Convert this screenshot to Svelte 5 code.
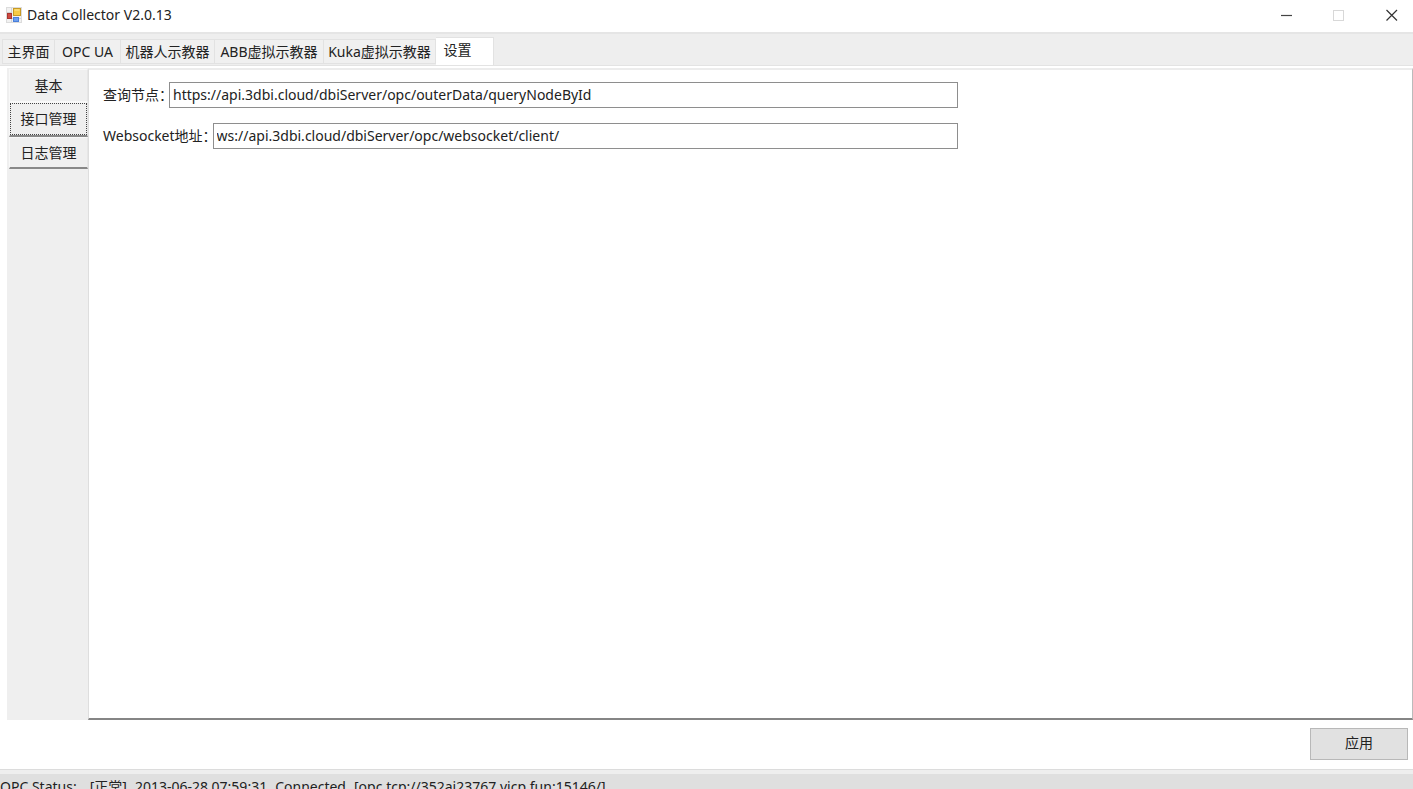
<script>
  const tabs = [
    { label: '主界面', basis: 53 },
    { label: 'OPC UA', basis: 66 },
    { label: '机器人示教器', basis: 94 },
    { label: 'ABB虚拟示教器', basis: 109 },
    { label: 'Kuka虚拟示教器', basis: 112 },
    { label: '设置', basis: 58 }
  ];
  const sections = ['基本', '接口管理', '日志管理'];
  let activeTab = $state(5);
  let activeSection = $state(1);
  let nodeUrl = $state('https://api.3dbi.cloud/dbiServer/opc/outerData/queryNodeById');
  let socketUrl = $state('ws://api.3dbi.cloud/dbiServer/opc/websocket/client/');
</script>

<div class="window">
  <header class="titlebar">
    <svg class="logo" width="17" height="17" viewBox="0 0 17 17" aria-hidden="true">
      <rect x="0.5" y="0.5" width="15" height="15" fill="#f1f1f1" stroke="#dcdcdc" />
      <path d="M1 5.5H6M1 11.5H15M5.5 1V15M10.5 11V15" stroke="#d4d4d4" />
      <rect x="1.5" y="6.5" width="4" height="5" fill="#cf4a42" stroke="#a93630" />
      <rect x="7.5" y="1.5" width="7" height="7" fill="#f7cb45" stroke="#c79a25" />
      <path d="M8.5 3H13.5" stroke="#ffe79a" />
      <rect x="7.5" y="10.5" width="5" height="4" fill="#6c9ff0" stroke="#4a7fda" />
    </svg>
    <h1>Data Collector V2.0.13</h1>
    <div class="controls">
      <button aria-label="最小化"><svg width="12" height="12" viewBox="0 0 12 12"><path d="M1 6.5H12" stroke="#444" stroke-width="1.2" /></svg></button>
      <button aria-label="最大化" disabled><svg width="12" height="12" viewBox="0 0 12 12"><rect x="0.5" y="1.5" width="10" height="10" fill="none" stroke="#d8d8d8" /></svg></button>
      <button aria-label="关闭"><svg width="12" height="12" viewBox="0 0 12 12"><path d="M0.5 1L11 11.5M11 1L0.5 11.5" stroke="#333" stroke-width="1.2" /></svg></button>
    </div>
  </header>

  <div class="tabs" role="tablist">
    {#each tabs as tab, i}
      <button
        role="tab"
        class:active={activeTab === i}
        aria-selected={activeTab === i}
        style="flex-basis: {tab.basis}px"
        onclick={() => (activeTab = i)}>{tab.label}</button>
    {/each}
  </div>

  <main>
    <nav>
      {#each sections as section, i}
        <button class:selected={activeSection === i} onclick={() => (activeSection = i)}><span>{section}</span></button>
      {/each}
    </nav>
    <section class="panel">
      <div class="field">
        <label for="node-url">查询节点：</label>
        <input id="node-url" type="text" spellcheck="false" bind:value={nodeUrl} />
      </div>
      <div class="field">
        <label for="socket-url">Websocket地址：</label>
        <input id="socket-url" type="text" spellcheck="false" bind:value={socketUrl} />
      </div>
    </section>
  </main>

  <div class="actions"><button>应用</button></div>

  <footer>
    <span class="caption">OPC Status:</span>
    <span>[正常]</span>
    <span>2013-06-28 07:59:31</span>
    <span>Connected</span>
    <span>[opc.tcp://352ai23767.vicp.fun:15146/]</span>
  </footer>
</div>

<style>
  .window {
    display: flex;
    flex-direction: column;
    height: 100vh;
    overflow: hidden;
    background: #fff;
    color: #222;
    font: 14px/20px "Noto Sans", "Noto Sans CJK SC", sans-serif;
  }
  .window * { box-sizing: border-box; }
  button, input {
    margin: 0;
    padding: 0;
    border: 0;
    border-radius: 0;
    background: none;
    color: inherit;
    font: inherit;
  }
  .titlebar {
    display: flex;
    flex: none;
    align-items: center;
    height: 32px;
    padding: 0 0 2px 6px;
  }
  h1 {
    margin: 0 auto 0 4px;
    font-size: 14px;
    font-weight: 400;
  }
  .controls {
    display: flex;
    margin-right: -5px;
  }
  .controls button {
    display: grid;
    place-items: center;
    width: 53px;
    height: 30px;
  }
  .tabs {
    display: flex;
    flex: none;
    align-items: flex-end;
    height: 34px;
    padding: 0 0 1px 2px;
    border-top: 2px solid #e5e5e5;
    border-bottom: 1px solid #e3e3e3;
    background: #eee;
  }
  .tabs button {
    flex: 0 0 auto;
    height: 25px;
    border: 1px solid #e2e2e2;
    border-left-width: 0;
    background: #f0f0f0;
    white-space: nowrap;
  }
  .tabs button:first-child { border-left-width: 1px; }
  .tabs button.active {
    height: 28px;
    margin-bottom: -1px;
    padding: 0 14px 4px 0;
    border-bottom: 0;
    background: #fff;
  }
  main {
    display: flex;
    flex: 1;
    min-height: 0;
    padding: 2px 0 0 7px;
  }
  nav {
    display: flex;
    flex: none;
    flex-direction: column;
    width: 81px;
    padding: 1px 0 0 2px;
    background: #efefef;
  }
  nav button {
    height: 32px;
    padding: 1px;
    border: 1px solid #f8f8f8;
    border-right-color: #e6e6e6;
    border-bottom: 2px solid #888;
  }
  nav button:first-child {
    height: 33px;
    border-bottom: 1px solid #f8f8f8;
  }
  nav button.selected { height: 35px; }
  nav span {
    display: grid;
    place-items: center;
    height: 100%;
  }
  nav .selected span { outline: 1px dotted #444; }
  .panel {
    flex: 1;
    min-width: 0;
    padding: 12px 0 0 14px;
    border: 1px solid #dedede;
    border-top: 2px solid #ececec;
    border-right-color: #bbb;
    border-bottom: 2px solid #858585;
  }
  .field {
    display: flex;
    align-items: center;
    width: calc(65% + 4px);
    margin-bottom: 15px;
  }
  label {
    margin-right: -4px;
    white-space: nowrap;
  }
  input {
    flex: 1;
    min-width: 0;
    height: 26px;
    padding: 0 3px 2px;
    border: 1px solid #8e8e8e;
    outline: 0;
  }
  .actions {
    display: flex;
    flex: none;
    justify-content: flex-end;
    padding: 8px 5px 9px;
  }
  .actions button {
    width: 98px;
    height: 32px;
    padding-bottom: 2px;
    border: 1px solid #b8b8b8;
    background: #e1e1e1;
  }
  footer {
    display: flex;
    flex: none;
    gap: 8px;
    height: 20px;
    padding-top: 7px;
    border-top: 1px solid #dcdcdc;
    background: linear-gradient(#eee 4px, #dfdfdf 4px);
    white-space: nowrap;
    overflow: hidden;
  }
  .caption { margin-right: 5px; }
</style>
